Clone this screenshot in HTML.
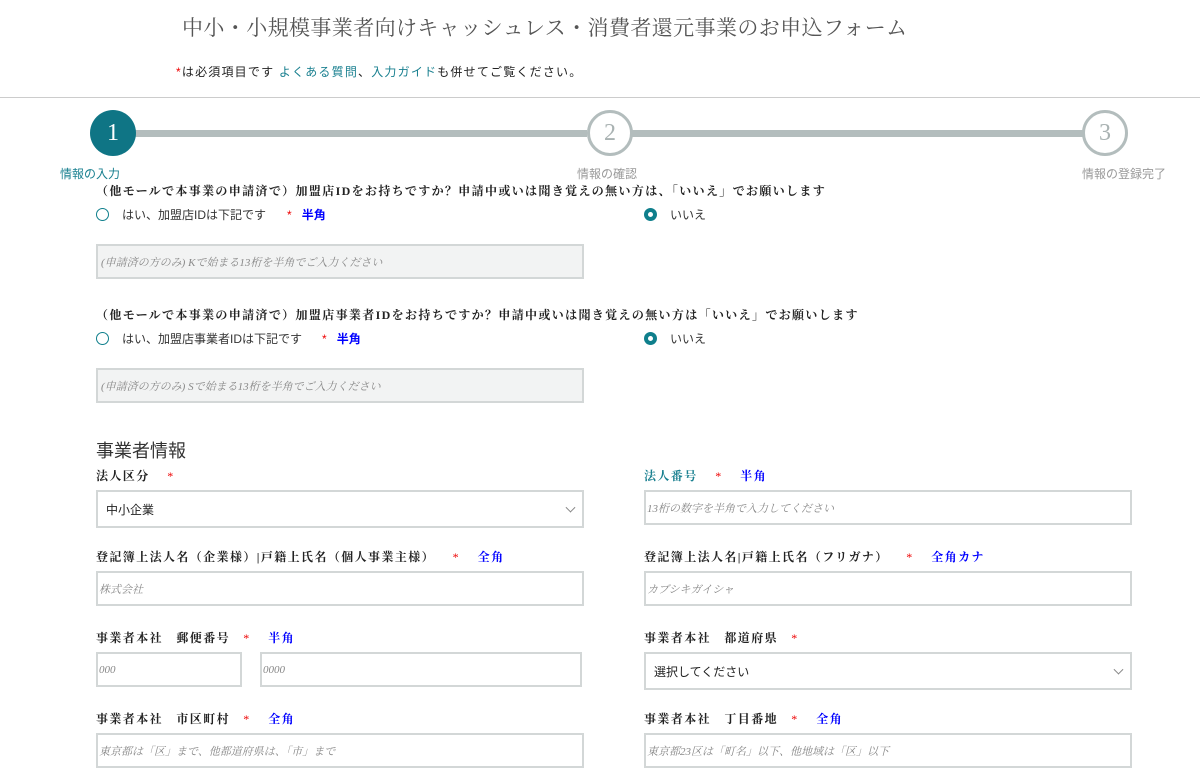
<!DOCTYPE html>
<html><head><meta charset="utf-8"><style>
*{margin:0;padding:0;box-sizing:border-box}
body{width:1200px;height:763px;overflow:hidden;background:#fff;position:relative;font-family:"Liberation Sans","Noto Sans CJK JP",sans-serif;color:#222}
.a{position:absolute;white-space:nowrap}
.serif{font-family:"Liberation Serif","Noto Serif CJK SC",serif}
.lbl{font-family:"Liberation Serif","Noto Serif CJK SC",serif;font-weight:bold;font-size:12px;letter-spacing:1.4px;color:#222}
.q{letter-spacing:1.35px}
.r{color:#e00;font-weight:normal}
.b{color:#00f;font-weight:bold}
.in{position:absolute;border:2px solid #d3d7d7;background:#fff;font-family:"Liberation Serif","Noto Serif CJK SC",serif;font-style:italic;font-size:11px;color:#888;padding-left:1px;display:flex;align-items:center}
.dis{background:#f2f3f3;padding-left:3px}
.sel{font-style:normal;color:#222;font-family:"Liberation Sans","Noto Sans CJK JP",sans-serif;font-size:12px;padding-left:8px}
.chev{position:absolute;right:8px;top:50%;width:7px;height:7px;border-right:1.5px solid #888;border-bottom:1.5px solid #888;transform:translateY(-70%) rotate(45deg)}
.rad{position:absolute;width:13px;height:13px;border-radius:50%;border:1.5px solid #0f7f8c}
.rad.on{border:4px solid #0f7f8c}
.sm{font-size:12px;color:#333}
.circ{position:absolute;width:46px;height:46px;border-radius:50%;font-family:"Liberation Serif",serif;font-size:24px;display:flex;align-items:center;justify-content:center}
</style></head><body>
<div class="a serif" style="left:182px;top:12px;font-size:21px;color:#555;letter-spacing:0.4px">中小・小規模事業者向けキャッシュレス・消費者還元事業のお申込フォーム</div>
<div class="a" style="left:176px;top:63px;font-size:12px;letter-spacing:1.2px"><span class="r">*</span>は必須項目です <span style="color:#1a8090">よくある質問</span>、<span style="color:#1a8090">入力ガイド</span>も併せてご覧ください。</div>
<div class="a" style="left:0;top:97px;width:1200px;height:1px;background:#ccc"></div>

<div class="a" style="left:135px;top:130px;width:452px;height:7px;background:#b3bdbd"></div>
<div class="a" style="left:632px;top:130px;width:452px;height:7px;background:#b3bdbd"></div>
<div class="circ" style="left:90px;top:110px;background:#0f7585;color:#fff">1</div>
<div class="circ" style="left:587px;top:110px;border:3px solid #b3bdbd;color:#a9b2b2;background:#fff">2</div>
<div class="circ" style="left:1082px;top:110px;border:3px solid #b3bdbd;color:#a9b2b2;background:#fff">3</div>
<div class="a" style="left:60px;top:165px;font-size:12px;color:#1a8090">情報の入力</div>
<div class="a" style="left:577px;top:165px;font-size:12px;color:#999">情報の確認</div>
<div class="a" style="left:1082px;top:165px;font-size:12px;color:#999">情報の登録完了</div>

<div class="a lbl q" style="left:96px;top:182px">（他モールで本事業の申請済で）加盟店IDをお持ちですか？申請中或いは聞き覚えの無い方は、「いいえ」でお願いします</div>
<div class="rad" style="left:96px;top:208px"></div>
<div class="a sm" style="left:122px;top:206px">はい、加盟店IDは下記です</div>
<div class="a" style="left:287px;top:206px;font-size:12px"><span class="r">*</span>&nbsp;&nbsp;&nbsp;<span class="b">半角</span></div>
<div class="rad on" style="left:644px;top:208px"></div>
<div class="a sm" style="left:670px;top:206px">いいえ</div>
<div class="in dis" style="left:96px;top:244px;width:488px;height:35px">(申請済の方のみ) Kで始まる13桁を半角でご入力ください</div>

<div class="a lbl q" style="left:96px;top:306px">（他モールで本事業の申請済で）加盟店事業者IDをお持ちですか？申請中或いは聞き覚えの無い方は「いいえ」でお願いします</div>
<div class="rad" style="left:96px;top:332px"></div>
<div class="a sm" style="left:122px;top:330px">はい、加盟店事業者IDは下記です</div>
<div class="a" style="left:322px;top:330px;font-size:12px"><span class="r">*</span>&nbsp;&nbsp;&nbsp;<span class="b">半角</span></div>
<div class="rad on" style="left:644px;top:332px"></div>
<div class="a sm" style="left:670px;top:330px">いいえ</div>
<div class="in dis" style="left:96px;top:368px;width:488px;height:35px">(申請済の方のみ) Sで始まる13桁を半角でご入力ください</div>

<div class="a" style="left:96px;top:437px;font-size:18px;color:#333">事業者情報</div>

<div class="a lbl" style="left:96px;top:467px">法人区分&nbsp;&nbsp;&nbsp;&nbsp;<span class="r">*</span></div>
<div class="in sel" style="left:96px;top:490px;width:488px;height:38px">中小企業<span class="chev"></span></div>
<div class="a lbl" style="left:644px;top:467px"><span style="color:#1a8090">法人番号</span>&nbsp;&nbsp;&nbsp;&nbsp;<span class="r">*</span>&nbsp;&nbsp;&nbsp;&nbsp;<span class="b">半角</span></div>
<div class="in" style="left:644px;top:490px;width:488px;height:35px">13桁の数字を半角で入力してください</div>

<div class="a lbl" style="left:96px;top:548px">登記簿上法人名（企業様）|戸籍上氏名（個人事業主様）&nbsp;&nbsp;&nbsp;&nbsp;<span class="r">*</span>&nbsp;&nbsp;&nbsp;&nbsp;<span class="b">全角</span></div>
<div class="in" style="left:96px;top:571px;width:488px;height:35px">株式会社</div>
<div class="a lbl" style="left:644px;top:548px">登記簿上法人名|戸籍上氏名（フリガナ）&nbsp;&nbsp;&nbsp;&nbsp;<span class="r">*</span>&nbsp;&nbsp;&nbsp;&nbsp;<span class="b">全角カナ</span></div>
<div class="in" style="left:644px;top:571px;width:488px;height:35px">カブシキガイシャ</div>

<div class="a lbl" style="left:96px;top:629px">事業者本社　郵便番号&nbsp;&nbsp;&nbsp;<span class="r">*</span>&nbsp;&nbsp;&nbsp;&nbsp;<span class="b">半角</span></div>
<div class="in" style="left:96px;top:652px;width:146px;height:35px">000</div>
<div class="in" style="left:260px;top:652px;width:322px;height:35px">0000</div>
<div class="a lbl" style="left:644px;top:629px">事業者本社　都道府県&nbsp;&nbsp;&nbsp;<span class="r">*</span></div>
<div class="in sel" style="left:644px;top:652px;width:488px;height:38px">選択してください<span class="chev"></span></div>

<div class="a lbl" style="left:96px;top:710px">事業者本社　市区町村&nbsp;&nbsp;&nbsp;<span class="r">*</span>&nbsp;&nbsp;&nbsp;&nbsp;<span class="b">全角</span></div>
<div class="in" style="left:96px;top:733px;width:488px;height:35px">東京都は「区」まで、他都道府県は、「市」まで</div>
<div class="a lbl" style="left:644px;top:710px">事業者本社　丁目番地&nbsp;&nbsp;&nbsp;<span class="r">*</span>&nbsp;&nbsp;&nbsp;&nbsp;<span class="b">全角</span></div>
<div class="in" style="left:644px;top:733px;width:488px;height:35px">東京都23区は「町名」以下、他地域は「区」以下</div>
</body></html>
